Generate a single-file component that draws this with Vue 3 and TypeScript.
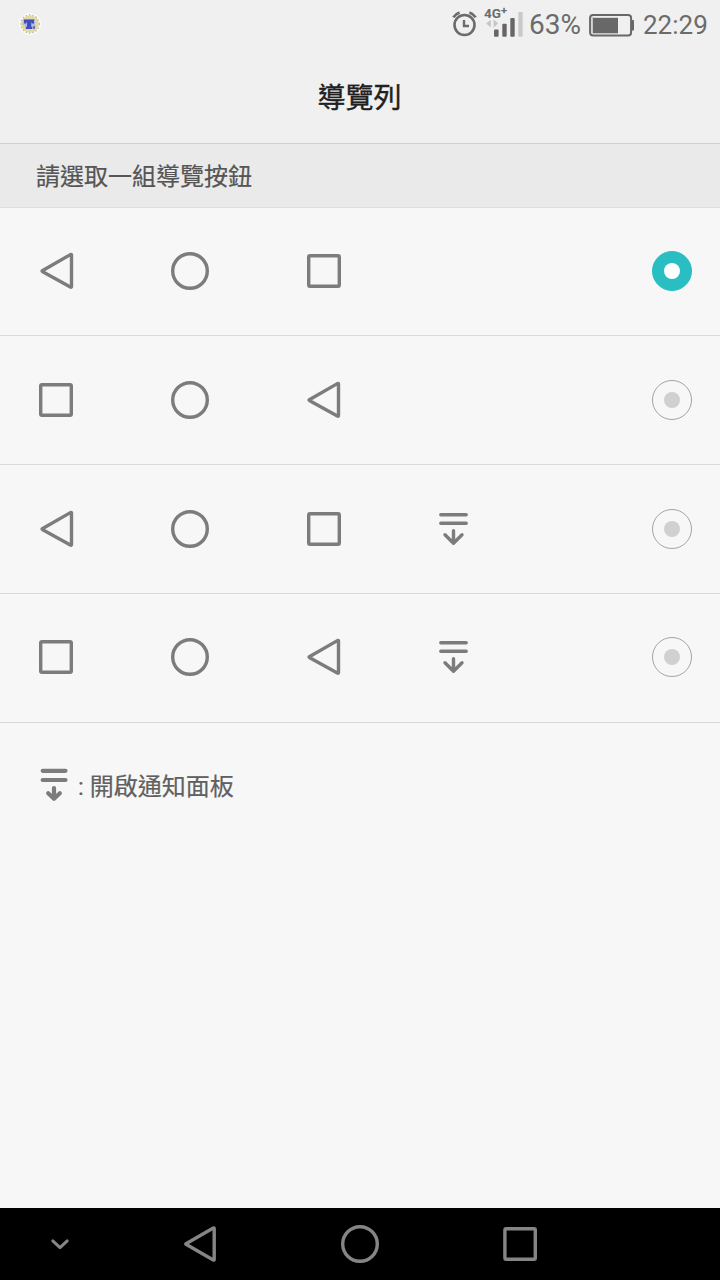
<script setup lang="ts">
import { ref } from 'vue'

type Glyph = 'back' | 'home' | 'recent' | 'panel'

interface Combo {
  id: number
  glyphs: Glyph[]
}

const combos: Combo[] = [
  { id: 0, glyphs: ['back', 'home', 'recent'] },
  { id: 1, glyphs: ['recent', 'home', 'back'] },
  { id: 2, glyphs: ['back', 'home', 'recent', 'panel'] },
  { id: 3, glyphs: ['recent', 'home', 'back', 'panel'] },
]

const selected = ref<number>(0)
</script>

<template>
  <div class="screen">
    <header class="status">
      <svg class="app-badge" viewBox="0 0 24 24">
        <circle cx="12" cy="12" r="11" fill="#fbfbfa" />
        <circle cx="12" cy="12" r="8.8" fill="#e3d9a2" />
        <circle cx="12" cy="12" r="9.2" fill="none" stroke="#c3c0a6" stroke-width="1.4" stroke-dasharray="1.5 2" />
        <path d="M4.800 7h12.400v10H7v-3.500H4.800z" fill="#b9bbd8" />
        <path d="M6 7.600h10v3.800h-2.200v-1h-.6v4.400h1v2.200H8v-2.200h1v-4.400h-.8v1H6z" fill="#3f4fc0" />
        <path d="M15 14.300h2v2.400h-2z" fill="#6668a8" />
      </svg>
      <svg class="alarm" viewBox="0 0 26 28" fill="none" stroke="#6b6b6b">
        <circle cx="12.500" cy="15" r="10" stroke-width="2.600" />
        <path d="M12 10v6h5" stroke-width="2.400" />
        <path d="M1.400 7.400Q3.500 3.800 7.600 2.500M23.600 7.400Q21.500 3.800 17.400 2.500" stroke-width="2.800" />
      </svg>
      <div class="signal">
        <span class="network">4G<sup>+</sup></span>
        <svg class="bars" viewBox="0 0 42 28">
          <path d="M2.200 13.500l4.600-4v8zM14.200 13.500l-4.600-4v8z" fill="#c6c6c6" />
          <rect x="10" y="19.500" width="4.600" height="7.200" rx="1" fill="#666" />
          <rect x="18.300" y="13.800" width="4.400" height="12.900" rx="1" fill="#666" />
          <rect x="26.300" y="8" width="4.400" height="18.700" rx="1" fill="#666" />
          <rect x="34.300" y="2" width="4.400" height="24.700" rx="1" fill="#c9c9c9" />
        </svg>
      </div>
      <span class="percent">63%</span>
      <svg class="battery" viewBox="0 0 46 24">
        <rect x="1.100" y="2.100" width="41" height="20.400" rx="3" fill="none" stroke="#686868" stroke-width="2" />
        <rect x="2.500" y="4" width="2" height="16.500" fill="#c9c9c9" />
        <rect x="4" y="4.800" width="25" height="15.500" fill="#686868" />
        <rect x="42.500" y="7" width="2.500" height="10.500" rx=".7" fill="#686868" />
      </svg>
      <span class="clock">22:29</span>
    </header>

    <div class="title">導覽列</div>
    <div class="section">請選取一組導覽按鈕</div>

    <main>
      <div v-for="combo in combos" :key="combo.id" class="row" @click="selected = combo.id">
        <div v-for="(glyph, i) in combo.glyphs" :key="i" class="cell">
          <svg class="glyph" :class="{ shifted: glyph === 'back' && i === 2 }" viewBox="0 .4 40 40">
            <path v-if="glyph === 'back'" d="M6.300 20.200L34.800 3.800Q35.500 3.600 35.500 4.500V35.900Q35.500 36.800 34.800 36.600L6.300 20.800Q5.800 20.500 6.300 20.200Z" />
            <circle v-else-if="glyph === 'home'" cx="20" cy="20.400" r="17.300" />
            <rect v-else-if="glyph === 'recent'" x="4.700" y="5.100" width="30.600" height="30.600" rx="1.200" />
            <path v-else d="M6.800 6.100h25.400M6.800 14.700h25.400M19.500 22.200v12.500M11 26.200l8.500 8.400 8.500-8.400" stroke-linecap="round" />
          </svg>
        </div>
        <span class="radio" :class="{ on: selected === combo.id }"><i></i></span>
      </div>
    </main>

    <div class="legend">
      <svg class="glyph legend-glyph" viewBox="0 0 40 40">
        <path d="M8.700 4.800h22.800M8.700 14h22.800M20 22v10M14.200 27.300l5.800 5.500 5.800-5.500" stroke-linecap="round" />
      </svg>
      <span class="legend-text">: 開啟通知面板</span>
    </div>

    <footer class="navbar">
      <svg viewBox="0 0 720 72" fill="none" stroke="#858585" stroke-width="3.400" stroke-linejoin="round">
        <path d="M52.800 32.800l7.200 6.900 7.200-6.900" stroke-width="3" stroke-linecap="round" />
        <path d="M186 35.700L213.300 20Q214.200 19.700 214.200 20.600V51.400Q214.200 52.300 213.300 52L186 36.300Q185.500 36 186 35.700Z" />
        <circle cx="360" cy="36" r="17.300" />
        <rect x="504.900" y="20.700" width="30.400" height="30.600" rx="1.200" />
      </svg>
    </footer>
  </div>
</template>

<style>
body {
  margin: 0;
}
</style>

<style scoped>
.screen {
  width: 720px;
  height: 1280px;
  display: flex;
  flex-direction: column;
  background: #f7f7f7;
  font-family: Roboto, "Noto Sans CJK TC", sans-serif;
  overflow: hidden;
}
.status {
  height: 50px;
  box-sizing: border-box;
  display: flex;
  align-items: center;
  background: #f0f0f0;
  color: #6b6b6b;
}
.app-badge {
  width: 24px;
  height: 24px;
  margin: 0 auto 2px 18px;
}
.alarm {
  width: 26px;
  height: 28px;
  margin-top: -3px;
}
.signal {
  position: relative;
  width: 42px;
  height: 28px;
  margin: -2px 3px 0 6px;
}
.bars {
  display: block;
  width: 42px;
  height: 28px;
}
.network {
  position: absolute;
  left: 0;
  top: -5px;
  font-size: 13.5px;
  line-height: 16px;
  font-weight: 700;
}
.network sup {
  font-size: 11px;
  line-height: 0;
  vertical-align: 4px;
}
.percent,
.clock {
  line-height: 50px;
  white-space: nowrap;
}
.percent {
  width: 60px;
  font-size: 28px;
}
.battery {
  width: 46px;
  height: 24px;
  margin-right: 8px;
}
.clock {
  width: 77px;
  font-size: 26px;
}
.title {
  height: 89px;
  padding: 4px 1px 0 0;
  border-bottom: 1px solid #cfcfcf;
  background: #f0f0f0;
  text-align: center;
  font-size: 28px;
  line-height: 89px;
  color: #202020;
  -webkit-text-stroke: 0.4px #202020;
}
.section {
  height: 63px;
  padding-left: 36px;
  border-bottom: 1px solid #dedede;
  background: #eaeaea;
  font-size: 24px;
  line-height: 67px;
  color: #555;
  -webkit-text-stroke: 0.2px #555;
}
.row {
  height: 128px;
  display: flex;
  align-items: center;
  padding: 0 28px 0 36px;
  border-bottom: 1px solid #dadada;
}
.row:first-child {
  height: 126px;
  padding-bottom: 1px;
}
.row:nth-child(3) {
  height: 127px;
  padding-bottom: 1px;
}
.row:nth-child(4) {
  height: 126px;
  padding-bottom: 2px;
}
.cell {
  width: 134px;
  height: 40px;
}
.cell:nth-child(3) {
  width: 130px;
}
.glyph {
  display: block;
  width: 40px;
  height: 40px;
  fill: none;
  stroke: #7c7c7c;
  stroke-width: 3.4;
  stroke-linejoin: round;
}
.shifted {
  margin-left: -1px;
}
.radio {
  width: 40px;
  height: 40px;
  margin-left: auto;
  box-sizing: border-box;
  display: flex;
  align-items: center;
  justify-content: center;
  border: 1.5px solid #a4a4a4;
  border-radius: 50%;
}
.radio i {
  width: 16px;
  height: 16px;
  border-radius: 50%;
  background: #d0d0d0;
}
.radio.on {
  border-color: #28bec2;
  background: #28bec2;
}
.radio.on i {
  background: #fff;
}
.legend {
  height: 126px;
  display: flex;
  align-items: center;
  padding-left: 34px;
}
.legend-glyph {
  stroke-width: 4.2;
}
.legend-text {
  margin-left: 4px;
  padding-top: 1px;
  font-size: 24px;
  line-height: 40px;
  color: #606060;
  -webkit-text-stroke: 0.2px #606060;
}
.navbar {
  height: 72px;
  margin-top: auto;
  background: #000;
}
.navbar svg {
  display: block;
  width: 720px;
  height: 72px;
}
</style>
